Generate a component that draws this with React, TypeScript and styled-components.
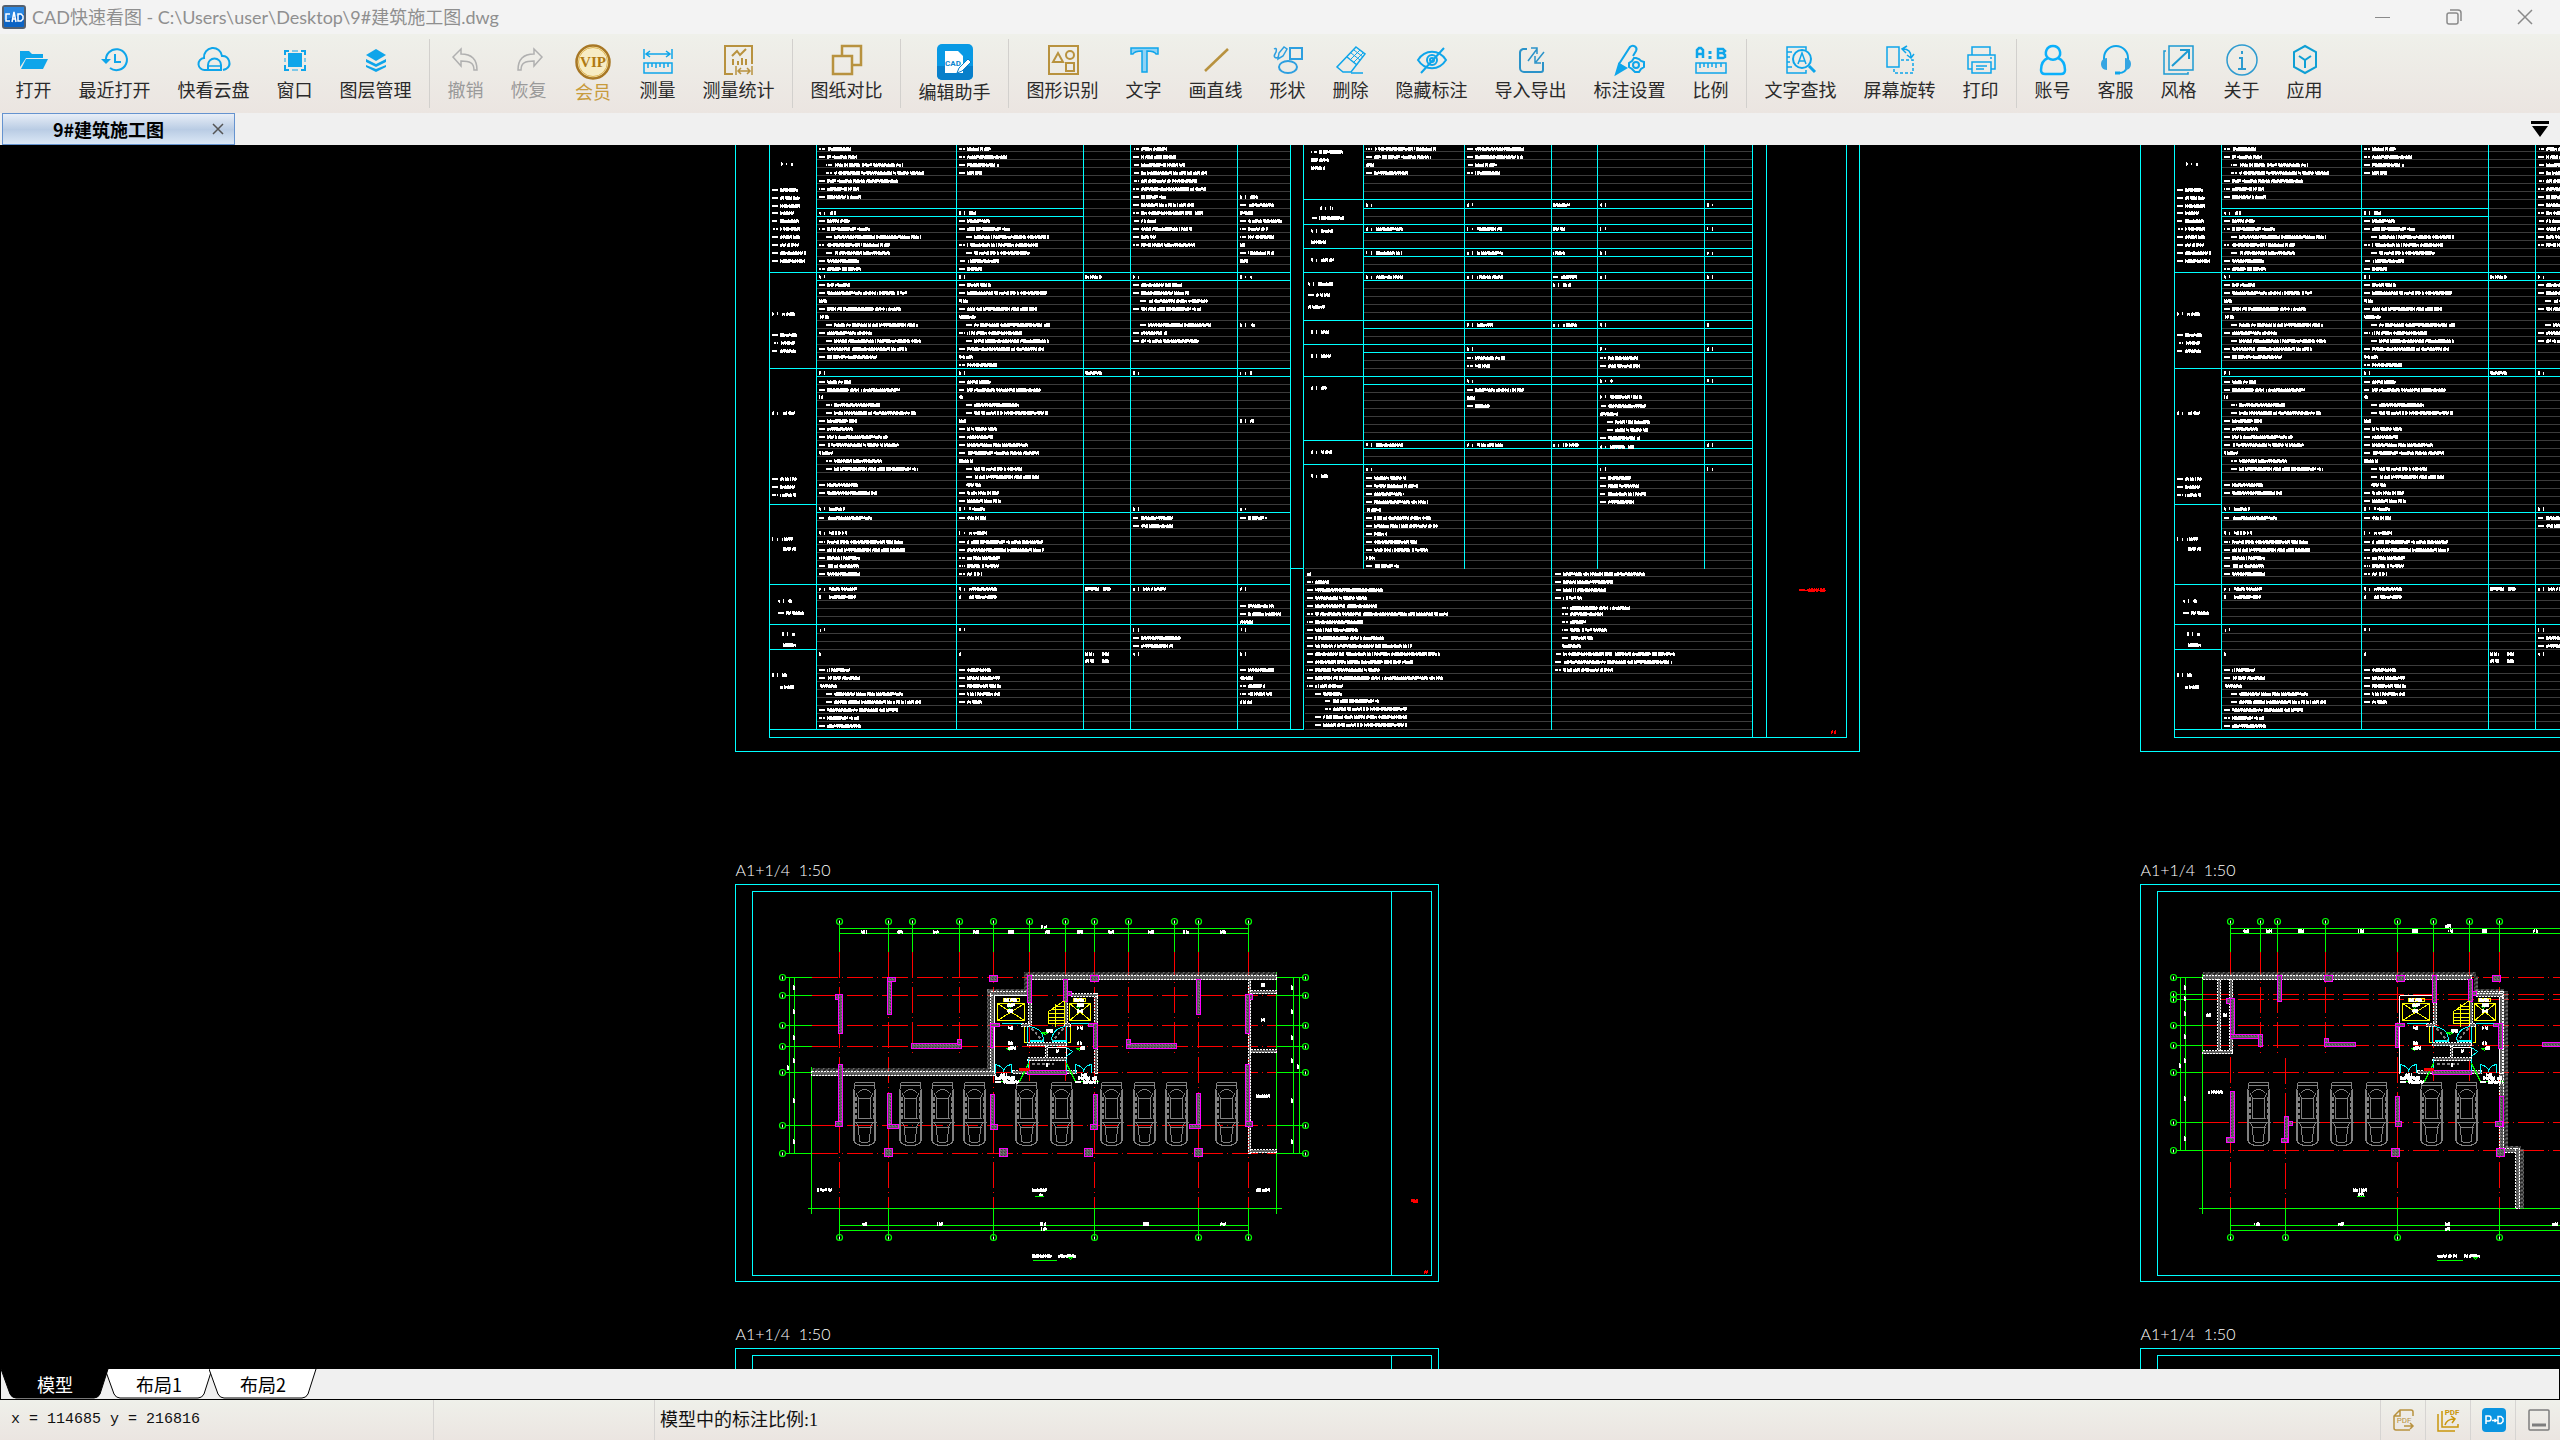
import React from "react";
import styled, { createGlobalStyle } from "styled-components";

const GlobalStyle = createGlobalStyle`
  *, *::before, *::after { box-sizing: border-box; }
  html, body, #root { height: 100%; }
  body { margin: 0; overflow: hidden; background: #f0f0f0; }
  button { font: inherit; color: inherit; border: 0; background: none; padding: 0; margin: 0; }
`;

const UI_FONT = `Lato, "Noto Sans CJK SC", sans-serif`;
const CJK_FONT = `"Noto Sans CJK SC", sans-serif`;

const BLUE = "#0ea5ea";
const GOLD = "#b8923f";

/* ---------- window frame ---------- */

const Window = styled.div`
  display: flex;
  flex-direction: column;
  height: 100vh;
  font-family: ${UI_FONT};
`;

const TitleBar = styled.header`
  display: flex;
  align-items: center;
  height: 34px;
  flex: none;
  padding-left: 2px;
  background: #f3f3f3;
`;

const AppTitle = styled.h1`
  flex: 1;
  margin: 0 0 0 6px;
  font-size: 18px;
  line-height: 24px;
  font-weight: 400;
  color: #8f8f8f;
  white-space: nowrap;
`;

const CaptionButton = styled.button`
  display: grid;
  place-items: center;
  width: 71px;
  height: 34px;
  color: #8a8a8a;
`;

/* ---------- toolbar ---------- */

const Toolbar = styled.nav`
  display: flex;
  height: 79px;
  flex: none;
  padding-left: 2px;
  background: linear-gradient(#eff0ea, #ebe5e1);
`;

const Tool = styled.button<{ $width: number; $large?: boolean; $tone?: string }>`
  display: flex;
  flex-direction: column;
  align-items: center;
  flex: none;
  width: ${(p) => p.$width}px;
  padding-top: ${(p) => (p.$large ? 10 : 8)}px;
  color: ${(p) => p.$tone ?? "#2a2a2a"};
  font-family: ${CJK_FONT};
  font-size: 18px;
  line-height: 22px;
  white-space: nowrap;
`;

const ToolIcon = styled.svg`
  display: block;
  width: 36px;
  height: 36px;
  fill: none;
  stroke-width: 2;
`;

const ToolDivider = styled.span`
  flex: none;
  width: 1px;
  height: 69px;
  margin: 5px 4px 0;
  background: #d2d0cd;
`;

/* ---------- file tabs ---------- */

const FileTabs = styled.div`
  display: flex;
  justify-content: space-between;
  height: 32px;
  flex: none;
  padding: 0 10px 0 2px;
  background: #f0f0f0;
`;

const FileTab = styled.div`
  display: flex;
  align-items: center;
  width: 233px;
  border: 1px solid #6593cf;
  background: linear-gradient(#e8eef7, #b9cce4 52%, #dce8f6);
`;

const FileTabName = styled.button`
  flex: 1;
  padding-left: 12px;
  font-family: ${CJK_FONT};
  font-size: 18px;
  line-height: 24px;
  font-weight: 700;
  color: #000;
`;

const FileTabClose = styled.button`
  display: grid;
  place-items: center;
  width: 32px;
  height: 30px;
`;

const TabMenuButton = styled.button`
  display: grid;
  place-items: center;
  width: 20px;
`;

/* ---------- drawing area ---------- */

const Viewport = styled.main`
  flex: 1;
  min-height: 0;
  background: #000;
`;

const Drawing = styled.svg`
  display: block;
  width: 100%;
  height: 100%;
  fill: none;
  shape-rendering: crispEdges;
`;

const SheetTitle = styled.text`
  font-family: Lato, sans-serif;
  font-size: 16px;
  font-weight: 300;
  fill: #fff;
  white-space: pre;
`;

/* ---------- layout tabs & status bar ---------- */

const LayoutTabs = styled.div`
  display: flex;
  height: 31px;
  flex: none;
  background: #f0f0f0;
  border: solid #000;
  border-width: 0 1px 1px 1px;
`;

const LayoutTab = styled.button<{ $active?: boolean }>`
  display: grid;
  place-items: center;
  width: 108px;
  margin-right: -4px;
  z-index: ${(p) => (p.$active ? 1 : 0)};
  color: ${(p) => (p.$active ? "#fff" : "#000")};
  font-family: ${CJK_FONT};
  font-size: 18px;
  line-height: 24px;
  > * { grid-area: 1 / 1; }
`;

const LayoutTabShape = styled.svg`
  display: block;
  width: 108px;
  height: 30px;
`;

const StatusBar = styled.footer`
  display: flex;
  align-items: stretch;
  height: 40px;
  flex: none;
  background: linear-gradient(#eff0ea, #ebe5e1);
  color: #111;
`;

const StatusCell = styled.div<{ $width?: number; $note?: boolean }>`
  display: flex;
  align-items: center;
  ${(p) => (p.$width ? `width: ${p.$width}px; flex: none; border-right: 1px solid #d6d4d2;` : "flex: 1;")}
  padding-left: ${(p) => (p.$note ? 5 : 11)}px;
  font-family: ${(p) => (p.$note ? `"Liberation Serif"` : `"Liberation Mono"`)}, "Noto Sans CJK SC", monospace;
  font-size: ${(p) => (p.$note ? 18 : 15)}px;
  line-height: 24px;
  white-space: pre;
`;

const StatusButton = styled.button`
  display: grid;
  place-items: center;
  width: 45px;
  padding-left: 2px;
  border-left: 1px solid #d6d4d2;
`;

const StatusIcon = styled.svg`
  display: block;
  width: 24px;
  height: 24px;
  fill: none;
`;

/* ---------- toolbar icons (36 x 36) ---------- */

const icons: Record<string, React.ReactNode> = {
  open: (
    <g fill="#0ea5ea">
      <path d="M4 25V9h9l3 3h11v4H10z" />
      <path d="M5 27l5-10h22l-5 10z" />
    </g>
  ),
  recent: (
    <g stroke={BLUE}>
      <path d="M9 19a10.500 10.500 0 1 1 4 7" />
      <path d="M18 12v8h6" />
      <path d="M4 17h10l-5 5z" fill={BLUE} stroke="none" />
    </g>
  ),
  cloud: (
    <g stroke={BLUE}>
      <path d="M11 28H9a6 6 0 0 1-1-12 9 9 0 0 1 18-2 7 7 0 0 1 4 13l-3 1" />
      <path d="M12 28v-5a6.500 6.500 0 0 1 13 0v5z" />
      <path d="M13 24h11" strokeWidth="1.500" />
    </g>
  ),
  window: (
    <g stroke={BLUE}>
      <path d="M12 12h12v12H12z" fill={BLUE} />
      <path d="M8 13V9h4M24 9h4v4M28 23v5h-4M12 28H8v-5" />
      <path d="M15 9h6M15 28h6M8 16v4M28 16v4" strokeWidth="1" />
    </g>
  ),
  layers: (
    <g fill={BLUE}>
      <path d="M18 7l10 6-10 6L8 13z" />
      <path d="M8 17l10 5 10-5v3l-10 5-10-5z" />
      <path d="M8 23l10 4 10-4v2l-10 5-10-5z" />
    </g>
  ),
  undo: <path d="M5 15l8-8v5c10 0 16 4 16 16h-3c0-7-4-9-13-9v5z" stroke="#b0b0b0" strokeWidth="1.500" />,
  redo: <path d="M31 15l-8-8v5C13 12 7 16 7 28h3c0-7 4-9 13-9v5z" stroke="#b0b0b0" strokeWidth="1.500" />,
  vip: (
    <g>
      <circle cx="18" cy="18" r="16.500" fill="#f7ecc4" stroke="#a87826" strokeWidth="2.500" />
      <circle cx="18" cy="18" r="14.500" stroke="#dfb552" strokeWidth="1" />
      <text x="18" y="23" textAnchor="middle" fontFamily="Liberation Serif, serif" fontWeight="700" fontSize="15" fill="#b07a12">VIP</text>
    </g>
  ),
  measure: (
    <g stroke={BLUE} strokeWidth="1.500">
      <path d="M4 7v10M32 7v10M6 12h24M10 9l-4 3 4 3M26 9l4 3-4 3" />
      <path d="M4 21h28v10H4zM8 21v5M12 21v4M16 21v5M20 21v4M24 21v5M28 21v4" />
    </g>
  ),
  stats: (
    <g stroke={GOLD}>
      <path d="M12 32H4V4h27v18" />
      <path d="M11 14l5-5 3 4 6-6M12 17v6M17 19v4M21 16v7M25 17v6" />
      <path d="M15 24v9M31 24v9M17 29h12M20 26l-3 3 3 3M26 26l3 3-3 3" strokeWidth="1.500" />
    </g>
  ),
  compare: (
    <g stroke={GOLD} strokeWidth="2.500">
      <path d="M13 14V4h19v19h-9" />
      <path d="M4 14h19v18H4z" />
    </g>
  ),
  assistant: (
    <g>
      <rect width="36" height="36" rx="5" fill="#0899e4" />
      <path d="M0 22h36v9a5 5 0 0 1-5 5H5a5 5 0 0 1-5-5z" fill="#087fca" />
      <path d="M8 7h13l5 5v17H8z" fill="#fff" />
      <text x="16" y="22" textAnchor="middle" fontFamily="Roboto, sans-serif" fontWeight="700" fontSize="8" fill="#0a86cf">CAD</text>
      <path d="M20 29l2-5 9-9 3 3-9 9z" fill="#fff" stroke="#087fca" strokeWidth="1" />
    </g>
  ),
  recognise: (
    <g stroke={GOLD}>
      <path d="M4 4h29v28H4z" />
      <path d="M8 20l5-9 5 9zM21 21h8v8h-8z" />
      <circle cx="25" cy="13" r="4" />
    </g>
  ),
  text: (
    <path d="M5 6h27v6h-2c-1-2-4-3-9-3v21h-5V9c-5 0-8 1-9 3H5z" stroke={BLUE} strokeWidth="1.500" fill="#8fd2f5" />
  ),
  line: <path d="M7 29L30 7" stroke={GOLD} strokeWidth="2.500" />,
  shapes: (
    <g stroke="#2d9fe0">
      <path d="M4 7c3-2 3 2 1 5s1 5 3 3M8 17l1-6 5-6 3 2-4 7z" strokeWidth="1.500" />
      <path d="M20 6h12v11H20z" />
      <ellipse cx="18" cy="25" rx="9" ry="6" />
    </g>
  ),
  erase: (
    <g stroke={BLUE} strokeWidth="1.500">
      <path d="M23 5l9 7-14 18H10l-6-5z" />
      <path d="M14 15l10 8M18 31h12" />
      <path d="M21 8l9 7M18 11l9 7M27 8L17 18M30 11L20 21" strokeWidth="1" />
    </g>
  ),
  hide: (
    <g stroke={BLUE}>
      <path d="M4 18c7-11 21-11 28 0-7 11-21 11-28 0zM30 6L7 31" />
      <circle cx="18" cy="18" r="5" />
      <circle cx="18" cy="18" r="2" />
    </g>
  ),
  exchange: (
    <g stroke="#2b93c9">
      <path d="M14 7H10a4 4 0 0 0-3 4v15a4 4 0 0 0 4 4h17a2 2 0 0 0 2-2V20" />
      <path d="M15 19L24 7M18 6h6v6M31 10l-8 10M22 14v7h6" strokeWidth="1.500" />
    </g>
  ),
  markSettings: (
    <g stroke={BLUE}>
      <path d="M7 22L18 5c3-3 8 0 6 4l-3 5M7 22l6 4" />
      <path d="M4 32l3-10 7 4z" fill={BLUE} />
      <path d="M24 16l3 1 2 2 3 1v5l-3 2-2 3h-4l-3-3-3-2v-4l3-2 2-3z" />
      <circle cx="24" cy="23" r="3" />
    </g>
  ),
  scale: (
    <g stroke={BLUE}>
      <path d="M4 16V8l2-2h2l2 2v8M4 12h6M25 7h5l2 2-2 2 2 2v2l-2 1h-5zM25 11h5" strokeWidth="2.500" />
      <path d="M17 9v3M17 14v3" strokeWidth="3" />
      <path d="M3 21h30v10H3zM7 21v5M11 21v4M15 21v5M19 21v4M23 21v5M28 21v4" strokeWidth="1.500" />
    </g>
  ),
  find: (
    <g stroke={BLUE}>
      <path d="M23 8V5H4v26h19v-3M4 10h5M4 15h3M4 20h3M4 25h5" strokeWidth="1.500" />
      <circle cx="19" cy="17" r="9" />
      <path d="M26 24l6 6" strokeWidth="3" />
      <path d="M15 22l4-11 4 11M16 19h6" strokeWidth="1.500" />
    </g>
  ),
  rotate: (
    <g stroke={BLUE} strokeWidth="1.500">
      <path d="M5 5h12v20H5z" />
      <path d="M19 18h12v13H12v-4" strokeDasharray="3 2" />
      <path d="M21 7c5 0 8 3 8 8M25 4l-5 3 4 4M25 13l4 3 3-4" />
    </g>
  ),
  print: (
    <g stroke={BLUE} strokeWidth="1.500">
      <path d="M9 13V5h18v8M9 27H5V13h27v14h-4" />
      <path d="M9 20h19v11H9zM13 24h11M13 27h8M27 16h2" />
    </g>
  ),
  account: (
    <path d="M18 4a7 7 0 0 1 5 12c5 2 7 7 7 12 0 3-2 4-4 4H10c-2 0-4-1-4-4 0-5 2-10 7-12a7 7 0 0 1 5-12zM13 16c3 2 7 2 10 0" stroke="#0bb0fb" strokeWidth="2.500" />
  ),
  support: (
    <g stroke={BLUE}>
      <path d="M6 19v-3a12 12 0 0 1 24 0v3M29 25c-1 4-4 6-8 6" />
      <path d="M9 16c-8 0-8 12 0 12zM27 16c8 0 8 12 0 12z" fill="#35a5e2" stroke="none" />
      <path d="M17 31h5" strokeWidth="3" />
    </g>
  ),
  style: (
    <g stroke="#1d9ad2" strokeWidth="1.500">
      <path d="M8 4h24v24H8zM5 9H3v23h24v-2" />
      <path d="M11 24L27 9M19 8h9v9" strokeWidth="2" />
    </g>
  ),
  about: (
    <g stroke="#2d9bd0" strokeWidth="1.500">
      <circle cx="18" cy="18" r="15" />
      <path d="M18 9v3M15 16h3v11M14 27h8" strokeWidth="2" />
    </g>
  ),
  apps: (
    <g stroke="#0f9fd4">
      <path d="M18 4l11 6v15l-11 6-11-6V10z" />
      <path d="M12 14l6 4 6-4M18 18v8" />
    </g>
  ),
};

type ToolSpec = { icon: string; label: string; large?: boolean; tone?: string };

const toolGroups: ToolSpec[][] = [
  [
    { icon: "open", label: "打开" },
    { icon: "recent", label: "最近打开" },
    { icon: "cloud", label: "快看云盘" },
    { icon: "window", label: "窗口" },
    { icon: "layers", label: "图层管理" },
  ],
  [
    { icon: "undo", label: "撤销", tone: "#9a9a9a" },
    { icon: "redo", label: "恢复", tone: "#9a9a9a" },
    { icon: "vip", label: "会员", large: true, tone: "#c89b3c" },
    { icon: "measure", label: "测量" },
    { icon: "stats", label: "测量统计" },
  ],
  [{ icon: "compare", label: "图纸对比" }],
  [{ icon: "assistant", label: "编辑助手", large: true }],
  [
    { icon: "recognise", label: "图形识别" },
    { icon: "text", label: "文字" },
    { icon: "line", label: "画直线" },
    { icon: "shapes", label: "形状" },
    { icon: "erase", label: "删除" },
    { icon: "hide", label: "隐藏标注" },
    { icon: "exchange", label: "导入导出" },
    { icon: "markSettings", label: "标注设置" },
    { icon: "scale", label: "比例" },
  ],
  [
    { icon: "find", label: "文字查找" },
    { icon: "rotate", label: "屏幕旋转" },
    { icon: "print", label: "打印" },
  ],
  [
    { icon: "account", label: "账号" },
    { icon: "support", label: "客服" },
    { icon: "style", label: "风格" },
    { icon: "about", label: "关于" },
    { icon: "apps", label: "应用" },
  ],
];

/* ---------- drawing primitives ---------- */

const CYAN = "#00ffff";
const GREEN = "#00ff00";
const RED = "#ff0000";
const MAGENTA = "#ff00ff";
const YELLOW = "#ffff00";

type Segment = [number, number, number];
const horizontals = (list: Segment[]) => list.map(([y, a, b]) => `M${a} ${y}H${b}`).join("");
const verticals = (list: Segment[]) => list.map(([x, a, b]) => `M${x} ${a}V${b}`).join("");

/* Lettering too small to resolve at this zoom: a run of short strokes. */
const scribble = (x: number, y: number, w: number, heading = false) => {
  let seed = (x * 73 + y * 151 + w * 31) % 7875;
  const next = () => {
    seed = (seed * 421 + 1663) % 7875;
    return seed / 7875;
  };
  let d = "";
  for (let i = 0; i < w; i++) {
    const a = next();
    const b = next();
    if (heading && i < 10 && ![0, 1, 5].includes(i)) continue;
    if (!heading && w > 20 && (i === 6 || i === 7)) continue;
    if (a < 0.06) continue;
    const lead = !heading && w > 20 && i < 6;
    const top = lead ? 1 : a > 0.4 ? 0 : 1;
    const bottom = lead ? 3 : b > 0.8 ? 3 : 4;
    d += `M${x + i} ${y - 2.5 + top}v${bottom - top}`;
  }
  return d;
};

/* [y, width, indent] rows; a negative width marks a heading row */
type Row = [number, number, number?];
type Column = { x: number; rows: Row[] };
const head = (ys: number[], w = 9): Row[] => ys.map((y) => [y, -w] as Row);

const columns: Column[] = [
  { x: 772, rows: [[164, -13, 9], [190, 26], [198, 28], [206, 28], [213, 23], [221, 28], [229, 28], [237, 28], [245, 27], [253, 34], [261, 33], [314, -23], [335, 25], [343, 23], [351, 24], [413, -23], [479, 25], [487, 23], [495, 24], [539, -21], [549, 14, 10], [601, -14, 6], [613, 26, 6], [634, -13, 10], [645, 14, 10], [675, -15], [687, 14, 8]] },
  { x: 819, rows: [[149, 32], [157, 38], [165, 77, 7], [173, 98, 7], [181, 79], [189, 40], [197, 42], [213, -17], [221, 31], [229, 51], [237, 95, 7], [245, 71], [253, 64, 7], [261, 40], [269, 42], ...head([277]), [285, 31], [293, 88], [301, 8], [309, 82], [317, 10], [325, 92, 7], [333, 54], [341, 95, 7], [349, 88], [357, 59], ...head([373]), [382, 32], [390, 81], [397, 4], [405, 54, 7], [413, 90, 7], [421, 38], [429, 34], [437, 69], [445, 80], [453, 14], [461, 56, 7], [469, 92, 7], [485, 40], [493, 58], [509, -26], [518, 53], [533, -28], [542, 84], [550, 86], [558, 41], [566, 40], [574, 42], ...head([589, 597], 38), ...head([630, 654]), [670, 31], [678, 41], [686, 18], [694, 77, 7], [702, 95, 7], [710, 79], [718, 40], [726, 42]] },
  { x: 959, rows: [[149, 32], [157, 48], [165, 40], [173, 23], [213, -17], [221, 32], [229, 51], [237, 83, 7], [245, 79], [253, 64, 7], [261, 40], [269, 23], ...head([277]), [285, 32], [293, 88], [301, 9], [309, 78], [317, 17], [325, 84, 7], [333, 63], [341, 83, 7], [349, 85], [357, 14], [365, 38], ...head([373]), [382, 32], [390, 82], [397, 4], [405, 53, 7], [413, 82, 7], [421, 7], [429, 38], [437, 34], [445, 69], [453, 80], [461, 14], [469, 56, 7], [477, 73, 7], [485, 15, 7], [493, 40], [501, 43], [509, -26], [518, 27], [533, -28], [542, 84], [550, 85], [558, 41], [566, 40], [574, 23], ...head([589, 597], 38), ...head([630, 654]), [670, 32], [678, 41], [686, 42], [694, 41], [702, 23]] },
  { x: 1085, rows: [[277, 17], [373, 17], [589, 14], [589, 8, 18], [654, 9], [654, 7, 17], [661, 9], [661, 7, 17]] },
  { x: 1133, rows: [[149, 34], [157, 43], [165, 52], [173, 74], [181, 64], [189, 73], [197, 33], [205, 61], [213, 70], [221, 23], [229, 59], [237, 23], [245, 62], ...head([277, 373, 509, 630, 654]), [285, 49], [293, 56], [301, 68, 7], [309, 68], [325, 71, 7], [333, 34], [341, 66], [518, 40], [526, 40], [589, -33], [638, 48], [646, 40]] },
  { x: 1240, rows: [[197, -18], [205, 34], [213, 13], [221, 42], [229, 28], [237, 34], [245, 5], [253, 34], [261, 8], ...head([277, 373], 12), ...head([325, 421], 15), ...head([509, 589, 630, 654]), [518, 27], [606, 34], [614, 41], [622, 13], [670, 34], [678, 13], [686, 25], [694, 32], [702, 12]] },
  { x: 1311, rows: [[152, 32], [160, 18], [168, 14], [208, -13, 9], [218, 33], [231, -22], [242, 15], [260, -23], [284, -25, -3], [295, 22, -3], [307, 17, -3], [332, -18], [356, -20], [388, -16], [452, -21], [476, -18]] },
  { x: 1366, rows: [[149, 70], [157, 65], [165, 8], [173, 42], ...head([205, 469]), ...head([229, 253, 277, 445], 37), [478, 40], [486, 52], [494, 38], [502, 62], [510, 15], [518, 65], [526, 72], [534, 21], [542, 51], [550, 62], [558, 9], [566, 33]] },
  { x: 1467, rows: [[149, 57], [157, 56], [165, 30], [173, 33], ...head([205, 349, 381]), ...head([229, 253, 277, 445], 36), [325, -26], [358, 38], [366, 23], [390, 57], [398, 8], [406, 23]] },
  { x: 1553, rows: [[205, 17], [229, 12], [253, 12], [277, 24], [285, -18], [325, -24], [445, -26]] },
  { x: 1600, rows: [...head([205, 229, 253, 277, 325, 349, 469]), [358, 38], [366, 40], [381, -13], [397, -42], [406, 46], [414, 18], [422, 43, 7], [430, 41, 7], [438, 40], [447, -34], [478, 31], [486, 39], [494, 46], [502, 34]] },
  { x: 1707, rows: head([205, 229, 253, 277, 325, 349, 381, 445, 469]) },
  { x: 1307, rows: [[574, 4], [582, 22], [590, 76], [598, 60], [606, 70], [614, 141], [622, 56], [630, 51], [638, 77], [646, 105], [654, 133], [662, 106], [670, 73], [678, 136], [686, 36], [694, 27, 8], [701, 54, 18], [709, 82, 18], [717, 92, 8], [725, 92, 8]] },
  { x: 1555, rows: [[574, 90], [582, 58], [590, 51], [598, 27], [608, 68, 7], [614, 41, 7], [622, 24, 7], [630, 45, 7], [638, 31, 7], [646, 19, 7], [654, 120], [662, 117], [670, 58]] },
];

const lettering = columns
  .flatMap((c) => c.rows.map(([y, w, indent = 0]) => scribble(c.x + indent, y, Math.abs(w), w < 0)))
  .join("");

const ruleYs = [
  ...Array.from({ length: 7 }, (_, i) => 151 + i * 8),
  ...Array.from({ length: 53 }, (_, i) => 208 + i * 8),
  ...Array.from({ length: 13 }, (_, i) => 633 + i * 8),
].filter((y) => y !== 657);

const ScheduleSheet = () => (
  <g>
    <path
      stroke="#3c3c3c"
      d={horizontals(ruleYs.flatMap((y) => [[y, 816, 1290], [y, y < 568 ? 1363 : 1304, 1752]] as Segment[]))}
    />
    <path
      stroke={CYAN}
      d={
        verticals([
          [735, 140, 751], [769, 140, 737], [816, 140, 729], [956, 140, 729], [1083, 140, 729], [1130, 140, 729],
          [1237, 140, 729], [1290, 140, 729], [1303, 140, 729], [1363, 140, 568], [1464, 140, 568], [1551, 140, 729],
          [1597, 140, 568], [1704, 140, 568], [1752, 140, 737], [1766, 140, 737], [1846, 140, 737], [1859, 140, 751],
        ]) +
        horizontals([
          [208, 816, 1083], [216, 816, 1083], [272, 769, 1290], [280, 816, 1290], [368, 769, 1290], [376, 816, 1290],
          [504, 769, 816], [512, 816, 1290], [584, 769, 1290], [624, 769, 1290], [649, 769, 816], [729, 769, 1303],
          [737, 769, 1846], [751, 735, 1859], [568, 1290, 1303], [199, 1303, 1752], [208, 1363, 1752],
          [224, 1303, 1752], [232, 1363, 1752], [248, 1303, 1752], [256, 1363, 1752], [272, 1303, 1752],
          [280, 1363, 1752], [320, 1303, 1752], [328, 1363, 1752], [344, 1303, 1752], [352, 1363, 1752],
          [376, 1303, 1752], [384, 1363, 1752], [440, 1303, 1752], [448, 1363, 1752], [464, 1303, 1752],
        ])
      }
    />
    <path stroke="#fff" d={lettering} />
    <path stroke={RED} d={scribble(1799, 590, 27) + scribble(1831, 732, 5) + "M1799 590H1825"} />
  </g>
);

const Car = ({ x }: { x: number }) => (
  <g stroke="#808080" transform={`translate(${x} 1082)`}>
    <path d="M1 0H21V6M1 0V6M1 3H21M0 6V56Q0 63 11 63Q22 63 22 56V6M1 7V58M21 7V58" />
    <path d="M4 11Q11 3 18 11M5 16H17V36H5ZM4 36H18M3 11L5 16M19 11L17 16M-1 40H23M4 45H18M3 40L5 45L6 59Q11 62 16 59L17 45L19 40" />
    <path d="M2 14V36M20 14V36" strokeDasharray="4 2" strokeWidth="2" />
  </g>
);

type Box = [number, number, number, number];

const Piers = ({ boxes }: { boxes: Box[] }) => (
  <g fill="url(#concrete)" stroke={MAGENTA}>
    {boxes.map(([x, y, w, h], i) => (
      <rect key={i} x={x} y={y} width={w} height={h} />
    ))}
  </g>
);

const Walls = ({ boxes }: { boxes: Box[] }) => (
  <g fill="url(#concrete)" stroke="#fff">
    {boxes.map(([x, y, w, h], i) => (
      <rect key={i} x={x} y={y} width={w} height={h} strokeDasharray="2 1" />
    ))}
  </g>
);

const Soil = ({ boxes }: { boxes: Box[] }) => (
  <g fill="url(#soil)">
    {boxes.map(([x, y, w, h], i) => (
      <rect key={i} x={x} y={y} width={w} height={h} />
    ))}
  </g>
);

const Bubbles = ({ points }: { points: [number, number][] }) => (
  <g stroke={GREEN} shapeRendering="auto">
    {points.map(([x, y]) => (
      <g key={`${x}-${y}`}>
        <circle cx={x} cy={y} r="3" strokeWidth="1.200" />
        <path d={`M${x} ${y - 1}v3`} stroke="#fff" />
      </g>
    ))}
  </g>
);

/* Stair, lifts and lobby shared by both floor plans */
const Core = () => (
  <g>
    <Walls
      boxes={[
        [1028, 996, 3, 28], [1064, 996, 3, 28], [1094, 993, 3, 80], [1071, 993, 26, 3],
        [1021, 1023, 8, 3], [1064, 1023, 6, 3], [1027, 1042, 39, 3], [1045, 1046, 2, 12], [1027, 1057, 39, 3],
        [1012, 1070, 16, 3], [1066, 1070, 10, 3],
      ]}
    />
    <path stroke="#fff" d="M994 995V1073M994 995H1028M1047 1047H1066V1057" />
    <Piers
      boxes={[
        [1027, 975, 4, 27], [1063, 979, 4, 22], [1067, 991, 4, 4], [990, 1023, 3, 24], [990, 1023, 9, 3],
        [1088, 1023, 9, 3], [1093, 1023, 4, 25], [1027, 1070, 39, 4],
      ]}
    />
    <path
      stroke={YELLOW}
      d="M997 1003H1024V1020H997ZL1024 1020M1024 1003L997 1020M1069 1003H1090V1020H1069ZL1090 1020M1090 1003L1069 1020M1003 998H1019V1001H1003ZM1073 998H1085V1001H1073ZM1064 1000L1048 1011V1023H1064V1000M1054 1006H1064M1051 1009H1064M1048 1013H1064M1048 1017H1064M1048 1020H1064M1055 1003V1026M1024 1026V1042H1027M1070 1026V1042H1067"
    />
    <path
      stroke={CYAN}
      d="M1001 1023H1021M1070 1023H1088M1027 1026V1042M1066 1026V1042M1029 1040H1043M1029 1041H1043M1051 1040H1066M1051 1041H1066M1029 1026Q1043 1028 1043 1040M1065 1026Q1052 1028 1051 1040M1066 1047L1072 1051L1066 1056M1028 1058V1070M1066 1058V1070M995 1072V1064Q1003 1066 1003 1071Q1004 1065 1011 1064V1072M1075 1072V1064Q1083 1066 1083 1071Q1084 1065 1091 1064V1072"
    />
    <path stroke="#808080" strokeWidth="2" d="M1031 1028L1042 1040M1063 1028L1052 1040M1031 1063H1053" strokeDasharray="3 2" />
    <path stroke={GREEN} d="M1028 1063L1019 1081H995M1066 1063L1075 1081H1098M1007 1006h4l-2 2zM1076 1006h4l-2 2zM1006 1048h5l-2 2zM1076 1048h5l-2 2zM1041 1032h7l-3 2z" />
    <path stroke={RED} strokeWidth="3" d="M1018 1069H1028" />
    <path
      stroke="#fff"
      d={
        scribble(995, 1078, 20) + scribble(995, 1082, 24) + scribble(1078, 1078, 19) + scribble(1075, 1082, 23) +
        scribble(1000, 1075, 7) + scribble(1081, 1075, 6) + scribble(1008, 1028, 6) + scribble(1077, 1028, 6) +
        scribble(1008, 1043, 5) + scribble(1077, 1043, 5) + scribble(1008, 1048, 8) + scribble(1079, 1048, 6) +
        scribble(1007, 1005, 8) + scribble(1077, 1005, 7) + scribble(1007, 1011, 6) + scribble(1077, 1011, 6) +
        scribble(1004, 1000, 13) + scribble(1074, 1000, 10) + scribble(1046, 1031, 7) + scribble(1056, 1051, 3) +
        scribble(1046, 1065, 2)
      }
    />
  </g>
);

type PlanProps = {
  columns: Segment[];
  rows: number[];
  left: number;
  right: number;
  bottomColumns: number[];
  dimStart: number;
  dimEnd: number;
};

const AxisGrid = ({ columns: cols, rows, left, right, bottomColumns, dimStart, dimEnd }: PlanProps) => (
  <g>
    <path stroke={RED} strokeDasharray="26 4 1 4" d={verticals(cols) + horizontals(rows.map((y) => [y, left, right]))} />
    <path
      stroke={GREEN}
      d={
        verticals(cols.filter(([, a]) => a < 1000).map(([x]) => [x, 924, 951])) +
        verticals(bottomColumns.map((x) => [x, 1208, 1235])) +
        horizontals([[928, dimStart, dimEnd], [933, dimStart, dimEnd], [1225, dimStart, dimEnd], [1230, dimStart, dimEnd]])
      }
    />
    <Bubbles
      points={[
        ...cols.filter(([, a]) => a < 1000).map(([x]) => [x, 921] as [number, number]),
        ...bottomColumns.map((x) => [x, 1237] as [number, number]),
      ]}
    />
  </g>
);

const sideLabels = (x: number, ys: number[]) => ys.map((y) => `M${x} ${y - 2}v5M${x + 1} ${y - 1}v4`).join("");
const dimLabels = (y: number, xs: number[]) => xs.map((x) => scribble(x - 3, y, 6)).join("");

const rowsA = [977, 995, 1025, 1046, 1072, 1125, 1153];
const rowsB = [977, 994, 999, 1025, 1045, 1072, 1122, 1150];

const PlanA = () => (
  <g>
    <path
      stroke={CYAN}
      d="M735 884H1438V1281H735ZM752 891H1431V1275H752ZM1391 891V1275M735 1400V1348H1438V1400M752 1400V1355H1431V1400M1391 1355V1400"
    />
    <AxisGrid
      columns={[
        [839, 951, 1208], [888, 951, 1208], [912, 951, 1055], [959, 951, 1055], [993, 951, 1208], [1029, 951, 1080],
        [1065, 951, 1080], [1094, 951, 1208], [1128, 951, 1055], [1174, 951, 1055], [1198, 951, 1208], [1248, 951, 1208],
      ]}
      rows={rowsA}
      left={811}
      right={1276}
      bottomColumns={[839, 888, 993, 1094, 1198, 1248]}
      dimStart={839}
      dimEnd={1248}
    />
    <path
      stroke={GREEN}
      d={
        horizontals(rowsA.flatMap((y) => [[y, 785, 811], [y, 1276, 1303]] as Segment[])) +
        "M789 977V1153M794 977V1153M1293 977V1153M1299 977V1153M811 1066V1213M807 1208H1281M1276 971V1213M1032 1260H1056"
      }
    />
    <Bubbles points={rowsA.flatMap((y) => [[782, y], [1305, y]] as [number, number][])} />
    {[853, 899, 931, 963, 1015, 1050, 1100, 1133, 1165, 1215].map((x) => (
      <Car key={x} x={x} />
    ))}
    <Soil boxes={[[1028, 971, 248, 4], [1023, 971, 5, 20], [986, 988, 42, 4], [986, 988, 4, 80], [811, 1067, 179, 4]]} />
    <Walls
      boxes={[
        [1028, 975, 248, 4], [990, 991, 38, 4], [990, 995, 4, 76], [811, 1071, 184, 4], [1248, 979, 2, 174],
        [1250, 990, 26, 3], [1250, 1049, 26, 3], [1250, 1149, 26, 3],
      ]}
    />
    <Piers
      boxes={[
        [989, 975, 8, 6], [887, 977, 4, 37], [887, 977, 8, 4], [835, 994, 7, 5], [838, 994, 4, 39], [911, 1043, 50, 5],
        [957, 1039, 4, 5], [838, 1064, 4, 62], [835, 1121, 7, 5], [887, 1093, 4, 35], [887, 1124, 11, 4],
        [884, 1148, 8, 8], [999, 1148, 8, 8], [1084, 1148, 8, 8], [1194, 1148, 8, 8], [990, 1094, 4, 35],
        [990, 1124, 7, 5], [1093, 1094, 4, 35], [1090, 1124, 7, 5], [1196, 1093, 4, 35], [1189, 1124, 11, 4],
        [1196, 979, 4, 35], [1126, 1043, 50, 5], [1126, 1039, 4, 5], [1245, 994, 7, 5], [1245, 994, 4, 39],
        [1245, 1064, 4, 62], [1245, 1121, 7, 5], [1090, 975, 8, 6],
      ]}
    />
    <Core />
    <path
      stroke="#fff"
      d={
        dimLabels(932, [864, 900, 936, 976, 1011, 1047, 1080, 1111, 1151, 1186, 1223]) +
        dimLabels(927, [1044]) + dimLabels(1224, [864, 940, 1043, 1146, 1223]) + dimLabels(1229, [1044]) +
        sideLabels(793, [986, 1010, 1036, 1059, 1099, 1140]) + sideLabels(787, [1066]) +
        sideLabels(1291, [986, 1010, 1036, 1059, 1099, 1140]) + sideLabels(1297, [1065]) +
        scribble(817, 1190, 15) + scribble(1032, 1190, 15) + scribble(1038, 1195, 5) + scribble(1256, 1190, 14) +
        scribble(1256, 1096, 14) + scribble(1261, 985, 4) + scribble(1261, 1020, 4) +
        scribble(1032, 1256, 20) + scribble(1058, 1256, 18)
      }
    />
    <path stroke={GREEN} d="M1034 1196h9M1068 1257h4l-2 2z" />
    <path stroke={RED} d={scribble(1411, 1201, 7) + scribble(1424, 1272, 4)} />
  </g>
);

const PlanB = () => (
  <g>
    <path stroke={CYAN} d="M2843 884H2140V1281H2843M2843 891H2157V1275H2843M2140 1400V1348H2843M2157 1400V1355H2843" />
    <AxisGrid
      columns={[
        [2230, 951, 1208], [2260, 951, 1055], [2277, 951, 1055], [2325, 951, 1055], [2397, 951, 1208],
        [2433, 951, 1080], [2469, 951, 1080], [2499, 951, 1208], [2285, 1057, 1208],
      ]}
      rows={rowsB}
      left={2202}
      right={2843}
      bottomColumns={[2230, 2285, 2397, 2499]}
      dimStart={2230}
      dimEnd={2800}
    />
    <path
      stroke={GREEN}
      d={
        horizontals(rowsB.map((y) => [y, 2176, 2202])) +
        "M2180 977V1150M2185 977V1150M2202 973V1213M2198 1208H2843M2436 1260H2462"
      }
    />
    <Bubbles points={rowsB.map((y) => [2173, y] as [number, number])} />
    {[2247, 2296, 2330, 2365, 2420, 2455].map((x) => (
      <Car key={x} x={x} />
    ))}
    <Soil
      boxes={[[2202, 971, 273, 4], [2473, 975, 4, 16], [2473, 988, 30, 3], [2503, 990, 4, 158], [2505, 1145, 15, 4], [2519, 1148, 4, 60]]}
    />
    <Walls
      boxes={[
        [2202, 975, 269, 4], [2471, 991, 31, 4], [2499, 991, 4, 157], [2503, 1148, 16, 4], [2515, 1148, 4, 60],
        [2217, 979, 3, 71], [2229, 979, 3, 74], [2202, 1050, 30, 3],
      ]}
    />
    <Piers
      boxes={[
        [2277, 975, 4, 26], [2324, 975, 8, 6], [2396, 975, 8, 6], [2492, 975, 8, 6], [2226, 998, 7, 5],
        [2230, 998, 4, 40], [2230, 1034, 32, 4], [2258, 1034, 4, 12], [2324, 1038, 4, 8], [2324, 1042, 31, 4],
        [2542, 1042, 30, 4], [2230, 1091, 4, 51], [2226, 1137, 8, 5], [2284, 1116, 4, 26], [2288, 1121, 4, 4],
        [2281, 1138, 6, 4], [2395, 1096, 4, 30], [2395, 1121, 6, 5], [2499, 1096, 4, 30], [2495, 1121, 7, 5],
        [2391, 1148, 8, 8], [2496, 1148, 8, 8],
      ]}
    />
    <g transform="translate(1405 0)">
      <Core />
    </g>
    <path
      stroke="#fff"
      d={
        dimLabels(931, [2246, 2269, 2301, 2361, 2415, 2451, 2484, 2535]) + dimLabels(926, [2448]) +
        dimLabels(1224, [2257, 2341, 2448, 2555]) + dimLabels(1229, [2448]) +
        sideLabels(2184, [986, 997, 1012, 1035, 1059, 1097, 1137]) + sideLabels(2179, [1064]) +
        scribble(2208, 1092, 15) + scribble(2353, 1190, 14) + scribble(2358, 1194, 6) +
        scribble(2206, 1015, 5) + scribble(2223, 1015, 4) + scribble(2437, 1256, 20) + scribble(2464, 1256, 17)
      }
    />
    <path stroke={GREEN} d="M2356 1196h8M2473 1257h4l-2 2z" />
  </g>
);

const ModelSpace = () => (
  <Drawing role="img" aria-label="9#建筑施工图">
    <defs>
      <pattern id="concrete" width="3" height="3" patternUnits="userSpaceOnUse">
        <rect width="3" height="3" fill="#222" />
        <path d="M0 0h2v1h-2zM1 1h2v1h-2zM0 2h1v1h-1z" fill="#909090" />
      </pattern>
      <pattern id="soil" width="5" height="4" patternUnits="userSpaceOnUse">
        <path d="M0 0h1v1h-1zM3 0h1v1h-1zM1 1h2v1h-2zM4 2h1v1h-1zM0 2h2v1h-2zM2 3h2v1h-2z" fill="#909090" />
      </pattern>
    </defs>
    <g transform="translate(0.5 -144.5)">
      <ScheduleSheet />
      <g transform="translate(1405 0)">
        <ScheduleSheet />
      </g>
      <PlanA />
      <PlanB />
      {[735, 2140].flatMap((x) =>
        [875, 1339].map((y) => (
          <SheetTitle key={`${x}-${y}`} x={x} y={y}>
            {"A1+1/4  1:50"}
          </SheetTitle>
        )),
      )}
    </g>
  </Drawing>
);

/* ---------- page ---------- */

const layouts = ["模型", "布局1", "布局2"];

export default function App() {
  return (
    <Window>
      <GlobalStyle />
      <TitleBar>
        <svg width="24" height="24" aria-hidden="true">
          <rect x="1" y="1" width="22" height="22" rx="2" fill="#0b63c4" stroke="#54606e" strokeWidth="2" />
          <path d="M2 2h20v7L2 15z" fill="#2a86e0" />
          <path d="M8 9H4v7h4M10 17l2-10 2 10M10 14h4M16 9v7h3l2-2v-3l-2-2z" fill="none" stroke="#fff" strokeWidth="1.500" />
        </svg>
        <AppTitle>CAD快速看图 - C:\Users\user\Desktop\9#建筑施工图.dwg</AppTitle>
        <CaptionButton aria-label="最小化">
          <svg width="16" height="16"><path d="M0 8.500h15" stroke="currentColor" /></svg>
        </CaptionButton>
        <CaptionButton aria-label="还原">
          <svg width="16" height="16" fill="none" stroke="currentColor">
            <rect x="1" y="4" width="11" height="11" rx="2" strokeWidth="1.500" />
            <path d="M4 1h8a3 3 0 0 1 3 3v8" strokeWidth="1.500" />
          </svg>
        </CaptionButton>
        <CaptionButton aria-label="关闭">
          <svg width="16" height="16" stroke="currentColor" strokeWidth="1.500"><path d="M1 1l14 14M15 1L1 15" /></svg>
        </CaptionButton>
      </TitleBar>

      <Toolbar>
        {toolGroups.map((group, g) => (
          <React.Fragment key={g}>
            {g > 0 && <ToolDivider />}
            {group.map((t) => (
              <Tool
                key={t.icon}
                $width={t.label.length * 18 + (t.icon === "vip" ? 30 : 27)}
                $large={t.large}
                $tone={t.tone}
              >
                <ToolIcon viewBox="0 0 36 36" aria-hidden="true">{icons[t.icon]}</ToolIcon>
                {t.label}
              </Tool>
            ))}
          </React.Fragment>
        ))}
      </Toolbar>

      <FileTabs>
        <FileTab>
          <FileTabName>9#建筑施工图</FileTabName>
          <FileTabClose aria-label="关闭图纸">
            <svg width="12" height="12" stroke="#555" strokeWidth="1.500"><path d="M1 1l10 10M11 1L1 11" /></svg>
          </FileTabClose>
        </FileTab>
        <TabMenuButton aria-label="图纸列表">
          <svg width="18" height="18"><path d="M0 1h18v3H0zM1 6h16l-8 11z" /></svg>
        </TabMenuButton>
      </FileTabs>

      <Viewport>
        <ModelSpace />
      </Viewport>

      <LayoutTabs>
        {layouts.map((name, i) => (
          <LayoutTab key={name} $active={i === 0}>
            <LayoutTabShape viewBox="0 0 108 30" aria-hidden="true">
              <path
                d="M0 0L9 25Q11 29 15 29H93Q97 29 99 25L107 0"
                fill={i === 0 ? "#000" : "#fff"}
                stroke="#000"
              />
            </LayoutTabShape>
            <span>{name}</span>
          </LayoutTab>
        ))}
      </LayoutTabs>

      <StatusBar>
        <StatusCell $width={434}>x = 114685 y = 216816</StatusCell>
        <StatusCell $width={221} />
        <StatusCell $note>模型中的标注比例:1</StatusCell>
        <StatusButton aria-label="PDF转换">
          <StatusIcon>
            <path d="M21 8V4q0-2-2-2H8L2 8v12q0 2 2 2h14M2 8h6V2" stroke={GOLD} strokeWidth="1.500" />
            <text x="12" y="15" textAnchor="middle" fontFamily="Roboto, sans-serif" fontSize="8" fill={GOLD}>PDF</text>
            <path d="M12 18h9M18 15l3 3-3 3" stroke={GOLD} strokeWidth="1.500" />
          </StatusIcon>
        </StatusButton>
        <StatusButton aria-label="PDF导出">
          <StatusIcon>
            <path d="M1 6v17h17M5 3v16h16v-3" stroke="#c9960c" strokeWidth="1.500" />
            <text x="15" y="7" textAnchor="middle" fontFamily="Roboto, sans-serif" fontWeight="700" fontSize="8" fill="#c9960c">PDF</text>
            <path d="M8 17q2-6 9-6M14 8l4 3-3 4" stroke="#c9960c" strokeWidth="1.500" />
          </StatusIcon>
        </StatusButton>
        <StatusButton aria-label="PDF转DWG">
          <StatusIcon>
            <rect width="24" height="24" rx="4" fill="#0a94e0" />
            <path d="M4 16V8h3q2 0 2 2.500T7 13H4M10 12.500h4M12.500 11l2 1.500-2 1.500M16 8.500h3l2 2v3l-2 2h-3z" stroke="#fff" strokeWidth="1.500" />
          </StatusIcon>
        </StatusButton>
        <StatusButton aria-label="命令栏">
          <StatusIcon>
            <rect x="2" y="2" width="20" height="20" rx="1" stroke="#7d7d7d" strokeWidth="1.500" />
            <path d="M5 17h14" stroke="#7d7d7d" strokeWidth="3" />
          </StatusIcon>
        </StatusButton>
      </StatusBar>
    </Window>
  );
}
